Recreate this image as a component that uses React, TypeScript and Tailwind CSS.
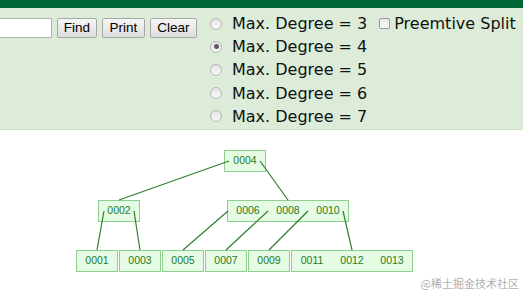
import React from "react";

type Node = { left: number; top: number; width: number; keys: string[] };

const nodes: Node[] = [
  { left: 224, top: 20, width: 42, keys: ["0004"] },
  { left: 98, top: 70, width: 42, keys: ["0002"] },
  { left: 227, top: 70, width: 122, keys: ["0006", "0008", "0010"] },
  { left: 76, top: 120, width: 42, keys: ["0001"] },
  { left: 119, top: 120, width: 42, keys: ["0003"] },
  { left: 162, top: 120, width: 42, keys: ["0005"] },
  { left: 205, top: 120, width: 42, keys: ["0007"] },
  { left: 248, top: 120, width: 42, keys: ["0009"] },
  { left: 291, top: 120, width: 122, keys: ["0011", "0012", "0013"] },
];

const lines: [number, number, number, number][] = [
  [229, 31, 119, 70],
  [260, 31, 288, 70],
  [104, 81, 97, 120],
  [134, 81, 140, 120],
  [228, 81, 183, 120],
  [268, 81, 226, 120],
  [308, 81, 269, 120],
  [343, 81, 352, 120],
];

function Radio({ checked }: { checked?: boolean }) {
  return (
    <div className="w-[12px] h-[12px] rounded-full border border-[#b4b4b4] bg-gradient-to-b from-[#e4e4e4] to-[#fafafa] flex items-center justify-center">
      {checked && <div className="w-[5px] h-[5px] rounded-full bg-[#5a5a5a]" />}
    </div>
  );
}

function Btn({ label, w }: { label: string; w: string }) {
  return (
    <div
      className={`${w} h-[20px] rounded-[2px] border border-[#a8a8a8] bg-gradient-to-b from-[#f6f6f6] to-[#dedede] flex items-center justify-center text-[13.5px] text-black`}
      style={{ fontFamily: '"Liberation Sans", Arial, sans-serif' }}
    >
      {label}
    </div>
  );
}

export default function App() {
  return (
    <div className="w-[523px] h-[294px] overflow-hidden bg-white relative">
      <div className="h-[8px] bg-[#006633]" />
      <div className="h-[122px] bg-[#dcecd8] border-b border-[#cfe0cb] flex items-start pt-[4px]">
        <div className="flex items-center mt-[6px]">
          <div className="w-[52px] h-[20px] bg-white border border-l-0 border-[#b0b0b0]" />
          <div className="ml-[5px] flex gap-[5px]">
            <Btn label="Find" w="w-[40px]" />
            <Btn label="Print" w="w-[43px]" />
            <Btn label="Clear" w="w-[47px]" />
          </div>
        </div>
        <div
          className="ml-[13px] flex flex-col text-[16px] text-[#111]"
          style={{ fontFamily: '"DejaVu Sans", Verdana, sans-serif' }}
        >
          {[3, 4, 5, 6, 7].map((d) => (
            <div key={d} className="h-[23.2px] flex items-center">
              <Radio checked={d === 4} />
              <span className="ml-[10px] leading-[23px]">Max. Degree = {d}</span>
            </div>
          ))}
        </div>
        <div
          className="ml-[12px] h-[23.2px] flex items-center text-[16px] text-[#111] whitespace-nowrap"
          style={{ fontFamily: '"DejaVu Sans", Verdana, sans-serif' }}
        >
          <div className="w-[11px] h-[11px] rounded-[2px] border border-[#9a9a9a] bg-gradient-to-b from-[#e8e8e8] to-[#fbfbfb]" />
          <span className="ml-[4px]">Preemtive Split</span>
        </div>
      </div>
      <div className="relative h-[164px]">
        {nodes.map((n, i) => (
          <div
            key={i}
            className="absolute h-[22px] border border-[#8fcf8f] bg-[#e6fbe3] flex items-center text-[10.5px] text-[#267a26]"
            style={{ left: n.left, top: n.top, width: n.width, fontFamily: '"Liberation Sans", Arial, sans-serif' }}
          >
            {n.keys.map((k) => (
              <div key={k} className="flex-1 text-center">
                {k}
              </div>
            ))}
          </div>
        ))}
        <svg className="absolute left-0 top-0 pointer-events-none" width={523} height={164}>
          {lines.map(([x1, y1, x2, y2], i) => (
            <line key={i} x1={x1} y1={y1} x2={x2} y2={y2} stroke="#2f7f2f" strokeWidth={1.2} />
          ))}
        </svg>
        <div
          className="absolute right-[4px] bottom-[3px] text-[11px] text-[#b0b0b0]"
          style={{ fontFamily: '"Noto Sans CJK SC", "Noto Sans", sans-serif' }}
        >
          @稀土掘金技术社区
        </div>
      </div>
    </div>
  );
}
